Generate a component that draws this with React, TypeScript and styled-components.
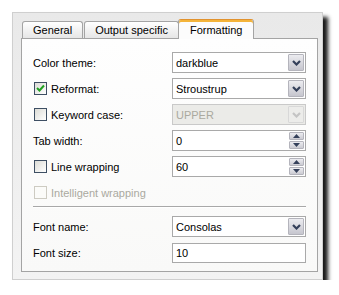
import styled, { createGlobalStyle, css } from "styled-components";

const GlobalStyle = createGlobalStyle`
    body {
        margin: 0;
        background: #ffffff;
        font-family: "Liberation Sans", Arial, sans-serif;
        font-size: 11px;
        color: #000;
    }
`;

function Chevron({ disabled = false }: { disabled?: boolean }) {
    const color = disabled ? "#c4c4c4" : "#34405a";
    return (
        <svg width="9" height="6" viewBox="0 0 9 6">
            <polyline points="1,1 4.5,4.5 8,1" fill="none" stroke={color} strokeWidth="2.2" />
        </svg>
    );
}

function SmallArrow({ up }: { up: boolean }) {
    return (
        <svg width="7" height="4" viewBox="0 0 7 4">
            <polygon points={up ? "0,4 3.5,0 7,4" : "0,0 3.5,4 7,0"} fill="#34405a" />
        </svg>
    );
}

function Select({ value, disabled = false }: { value: string; disabled?: boolean }) {
    return (
        <Field $disabled={disabled}>
            <FieldText $disabled={disabled}>{value}</FieldText>
            <DropButton $disabled={disabled}>
                <Chevron disabled={disabled} />
            </DropButton>
        </Field>
    );
}

function Spinner({ value }: { value: string }) {
    return (
        <Field>
            <FieldText>{value}</FieldText>
            <SpinStack>
                <SpinButton>
                    <SmallArrow up />
                </SpinButton>
                <SpinButton>
                    <SmallArrow up={false} />
                </SpinButton>
            </SpinStack>
        </Field>
    );
}

function Check({ label, checked = false, disabled = false }: { label: string; checked?: boolean; disabled?: boolean }) {
    return (
        <CheckLabel $disabled={disabled}>
            <Box $disabled={disabled}>
                {checked && (
                    <svg width="9" height="9" viewBox="0 0 9 9">
                        <polyline points="1,4 3.5,6.5 8,1.5" fill="none" stroke="#21a121" strokeWidth="2" />
                    </svg>
                )}
            </Box>
            <span>{label}</span>
        </CheckLabel>
    );
}

export default function App() {
    return (
        <>
            <GlobalStyle />
            <Frame>
                <TabStrip>
                    <Tab>General</Tab>
                    <Tab>Output specific</Tab>
                    <Tab $active>Formatting</Tab>
                </TabStrip>
                <Panel>
                    <Row>
                        <Label>Color theme:</Label>
                        <Select value="darkblue" />
                    </Row>
                    <Row>
                        <Check label="Reformat:" checked />
                        <Select value="Stroustrup" />
                    </Row>
                    <Row>
                        <Check label="Keyword case:" />
                        <Select value="UPPER" disabled />
                    </Row>
                    <Row>
                        <Label>Tab width:</Label>
                        <Spinner value="0" />
                    </Row>
                    <Row>
                        <Check label="Line wrapping" />
                        <Spinner value="60" />
                    </Row>
                    <Row>
                        <Check label="Intelligent wrapping" disabled />
                    </Row>
                    <Separator />
                    <Row>
                        <Label>Font name:</Label>
                        <Select value="Consolas" />
                    </Row>
                    <Row $last>
                        <Label>Font size:</Label>
                        <Field $short>
                            <FieldText>10</FieldText>
                        </Field>
                    </Row>
                </Panel>
            </Frame>
        </>
    );
}

const Frame = styled.div`
    margin: 12px 0 0 12px;
    width: 311px;
    height: 268px;
    box-sizing: border-box;
    border: 1px solid #cfcfcf;
    background: linear-gradient(#e9e9e9, #f3f3f3);
    box-shadow: 5px 5px 4px rgba(0, 0, 0, 0.9);
    padding: 6px 4px 9px 8px;
    display: flex;
    flex-direction: column;
`;

const TabStrip = styled.div`
    display: flex;
    align-items: flex-end;
    height: 19px;
    position: relative;
    z-index: 1;
`;

const Tab = styled.div<{ $active?: boolean }>`
    box-sizing: border-box;
    height: 17px;
    margin-left: 1px;
    padding: 2px 10px 0;
    border: 1px solid #a4a4a4;
    border-bottom: none;
    border-radius: 3px 3px 0 0;
    background: linear-gradient(#ffffff, #e6e6e6);
    white-space: nowrap;
    line-height: 13px;

    ${(p) =>
        p.$active &&
        css`
            height: 20px;
            margin-left: -1px;
            margin-bottom: -1px;
            padding: 4px 11px 0;
            background: #fcfcfc;
            box-shadow: inset 0 2px 0 #f4b43a;
            border-top: 1px solid #e1922e;
        `}
`;

const Panel = styled.div`
    flex: 1;
    border: 1px solid #a4a4a4;
    background: linear-gradient(#fefefe, #f9f9f8);
    padding: 13px 11px 8px;
    display: flex;
    flex-direction: column;
`;

const Row = styled.div<{ $last?: boolean }>`
    display: grid;
    grid-template-columns: 1fr 134px;
    align-items: center;
    height: 21px;
    margin-bottom: ${(p) => (p.$last ? "0" : "5px")};
`;

const Label = styled.span`
    white-space: nowrap;
`;

const CheckLabel = styled.label<{ $disabled?: boolean }>`
    display: flex;
    align-items: center;
    gap: 4px;
    margin-left: 1px;
    white-space: nowrap;
    color: ${(p) => (p.$disabled ? "#aaa99f" : "#000")};
`;

const Box = styled.span<{ $disabled?: boolean }>`
    box-sizing: border-box;
    width: 13px;
    height: 13px;
    display: flex;
    align-items: center;
    justify-content: center;
    border: 1px solid ${(p) => (p.$disabled ? "#cdcbc2" : "#3e4f63")};
    background: ${(p) => (p.$disabled ? "#fbfbf9" : "linear-gradient(135deg, #dcdcd6, #ffffff)")};
`;

const Field = styled.div<{ $disabled?: boolean; $short?: boolean }>`
    box-sizing: border-box;
    height: ${(p) => (p.$short ? "20px" : "21px")};
    border: 1px solid ${(p) => (p.$disabled ? "#c9c9c9" : "#a9a9a9")};
    background: ${(p) => (p.$disabled ? "#ebebe8" : "#ffffff")};
    display: flex;
    align-items: center;
    padding: 1px;
`;

const FieldText = styled.span<{ $disabled?: boolean }>`
    flex: 1;
    padding-left: 2px;
    color: ${(p) => (p.$disabled ? "#aaa99f" : "#000")};
`;

const DropButton = styled.span<{ $disabled?: boolean }>`
    box-sizing: border-box;
    width: 16px;
    height: 17px;
    display: flex;
    align-items: center;
    justify-content: center;
    border: 1px solid ${(p) => (p.$disabled ? "#d8d8d8" : "#b4b4bc")};
    border-radius: 1px;
    background: ${(p) => (p.$disabled ? "#ececea" : "linear-gradient(#ececf0, #c6c6ce)")};
`;

const SpinStack = styled.span`
    display: flex;
    flex-direction: column;
    gap: 1px;
    height: 17px;
`;

const SpinButton = styled.span`
    box-sizing: border-box;
    width: 15px;
    height: 8px;
    display: flex;
    align-items: center;
    justify-content: center;
    border: 1px solid #b4b4bc;
    border-radius: 1px;
    background: linear-gradient(#ececf0, #cbcbd2);
`;

const Separator = styled.div`
    height: 1px;
    background: #a8a8a8;
    box-shadow: 0 1px 0 #ffffff;
    margin: -2px 0 9px;
`;
